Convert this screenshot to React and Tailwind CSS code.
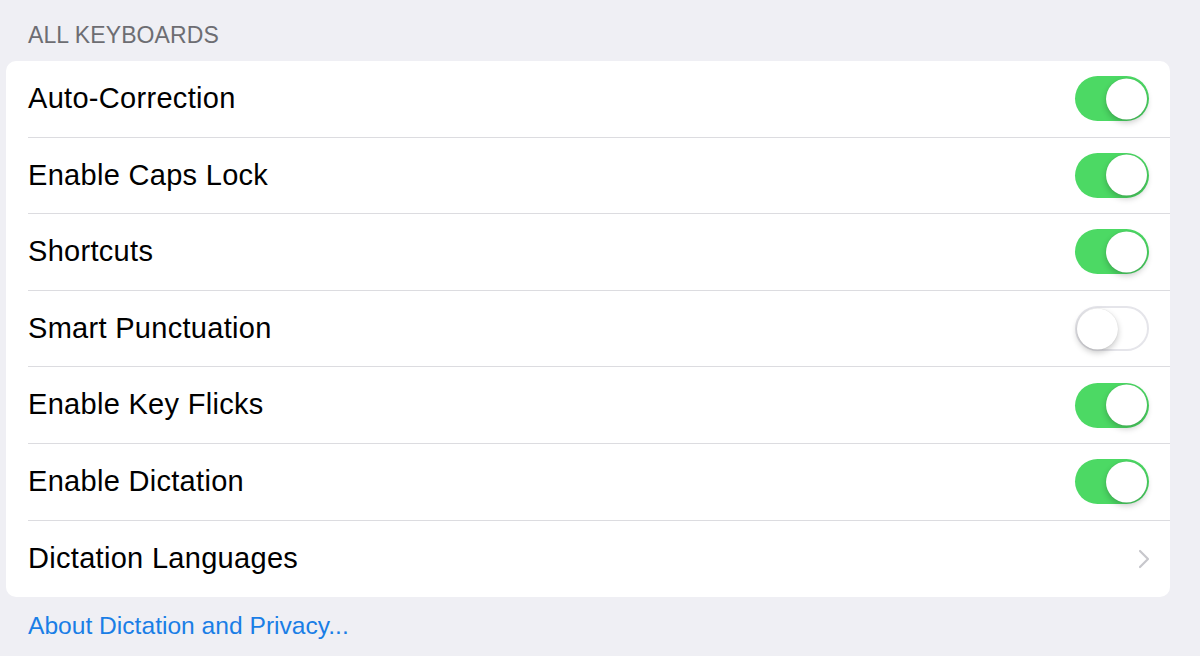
import React, { useState } from 'react';

const rows = [
    { label: 'Auto-Correction', on: true },
    { label: 'Enable Caps Lock', on: true },
    { label: 'Shortcuts', on: true },
    { label: 'Smart Punctuation', on: false },
    { label: 'Enable Key Flicks', on: true },
    { label: 'Enable Dictation', on: true },
];

const Toggle = ({ on, onChange }) => (
    <button
        onClick={onChange}
        className={`relative w-[74px] h-[45px] rounded-full transition-colors ${
            on ? 'bg-[#4cd964]' : 'bg-white border-2 border-[#e5e5ea]'
        }`}
    >
        <span
            className={`absolute top-1/2 -translate-y-1/2 w-[41px] h-[41px] rounded-full bg-white shadow-[0_3px_6px_rgba(0,0,0,0.22),0_0_1px_rgba(0,0,0,0.15)] transition-all ${
                on ? 'left-[31px]' : 'left-[0px]'
            }`}
        />
    </button>
);

const App = () => {
    const [states, setStates] = useState(rows.map((r) => r.on));

    const flip = (i) => setStates(states.map((s, j) => (j === i ? !s : s)));

    return (
        <div className="w-[1200px] h-[656px] bg-[#efeff4] overflow-hidden font-['Liberation_Sans',Arial,sans-serif]">
            {/* Section header */}
            <div className="h-[61px] pl-[28px] pt-[21px] text-[23px] leading-[28px] text-[#6d6d72] tracking-[0.1px]">
                ALL KEYBOARDS
            </div>

            {/* Card */}
            <div className="ml-[6px] w-[1164px] bg-white rounded-[10px] overflow-hidden">
                {rows.map((row, i) => (
                    <div key={row.label} className="pl-[22px]">
                        <div className="h-[76.6px] flex items-center justify-between pr-[21px] border-b border-[#dcdce0]">
                            <span className="text-[29px] tracking-[0.3px] text-black">{row.label}</span>
                            <Toggle on={states[i]} onChange={() => flip(i)} />
                        </div>
                    </div>
                ))}
                <div className="pl-[22px]">
                    <div className="h-[76.6px] flex items-center justify-between pr-[20px]">
                        <span className="text-[29px] tracking-[0.3px] text-black">Dictation Languages</span>
                        <svg width="12" height="20" viewBox="0 0 12 20" fill="none">
                            <path d="M2 2l8 8-8 8" stroke="#c7c7cc" strokeWidth="2.2" strokeLinecap="round" strokeLinejoin="round" />
                        </svg>
                    </div>
                </div>
            </div>

            {/* Footer link */}
            <div className="pl-[28px] pt-[11px]">
                <a className="text-[24.6px] text-[#1a7ee6] cursor-pointer">About Dictation and Privacy...</a>
            </div>
        </div>
    );
};

export default App;
